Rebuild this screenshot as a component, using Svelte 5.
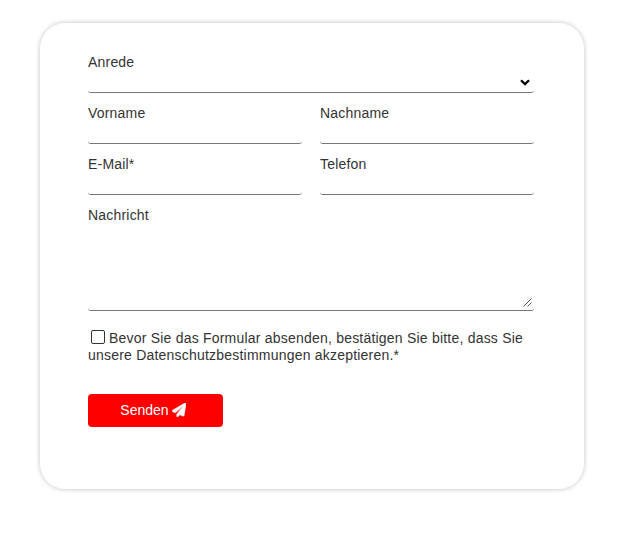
<script lang="ts">
	let anrede = $state('');
	let vorname = $state('');
	let nachname = $state('');
	let email = $state('');
	let telefon = $state('');
	let nachricht = $state('');
	let accepted = $state(false);

	const handleSubmit = (e: SubmitEvent) => {
		e.preventDefault();
	};
</script>

<main>
	<form class="card" onsubmit={handleSubmit}>
		<div class="fields">
			<label class="field wide">
				<span>Anrede</span>
				<div class="select">
					<select bind:value={anrede}>
						<option value=""></option>
						<option>Frau</option>
						<option>Herr</option>
					</select>
					<svg class="chevron" viewBox="0 0 10 7" width="10" height="7">
						<path d="M1 1.2 5 5.1 9 1.2" fill="none" stroke="#000" stroke-width="2.2" />
					</svg>
				</div>
			</label>
			<label class="field">
				<span>Vorname</span>
				<input type="text" bind:value={vorname} />
			</label>
			<label class="field">
				<span>Nachname</span>
				<input type="text" bind:value={nachname} />
			</label>
			<label class="field">
				<span>E-Mail*</span>
				<input type="email" bind:value={email} />
			</label>
			<label class="field">
				<span>Telefon</span>
				<input type="tel" bind:value={telefon} />
			</label>
			<label class="field wide">
				<span>Nachricht</span>
				<div class="message">
					<textarea bind:value={nachricht}></textarea>
					<svg class="grip" viewBox="0 0 9 9" width="9" height="9">
						<path d="M.5 8.5 8.5.5M4.5 8.5 8.5 4.5" stroke="#555" fill="none" />
					</svg>
				</div>
			</label>
		</div>

		<label class="consent">
			<input type="checkbox" bind:checked={accepted} />Bevor Sie das Formular absenden, bestätigen Sie bitte, dass Sie unsere Datenschutzbestimmungen akzeptieren.*
		</label>

		<button type="submit">
			Senden
			<svg viewBox="0 0 512 512" width="14" height="14">
				<path
					fill="#fff"
					stroke="#fff"
					stroke-width="24"
					d="M476 3.2 12.5 270.6c-18.1 10.4-15.8 35.6 2.2 43.2L121 358.4l287.3-253.2c5.5-4.9 13.3 2.6 8.6 8.3L176 407v80.5c0 23.6 28.5 32.9 42.5 15.8L282 426l124.6 52.2c14.2 6 30.4-2.9 33-18.2l72-432C515 7.8 493.3-6.8 476 3.2z"
				/>
			</svg>
		</button>
	</form>
</main>

<style>
	:global(body) {
		background: #fff;
	}

	main {
		box-sizing: border-box;
		min-height: 100vh;
		padding: 23px 0 0 40px;
	}

	.card {
		box-sizing: border-box;
		width: 544px;
		height: 466px;
		padding: 31px 50px 0 48px;
		border-radius: 25px;
		background: #fff;
		box-shadow: 0 0 5px rgba(0, 0, 0, 0.25);
		font: 14px/17px 'Liberation Sans', Arial, sans-serif;
		color: #333;
	}

	.fields {
		display: grid;
		grid-template-columns: 1fr 1fr;
		gap: 12px 18px;
		letter-spacing: 0.2px;
	}

	.field {
		display: flex;
		flex-direction: column;
	}

	.wide {
		grid-column: 1 / -1;
	}

	.field span {
		height: 17px;
	}

	.field input,
	select,
	textarea {
		box-sizing: border-box;
		display: block;
		width: 100%;
		height: 22px;
		margin: 0;
		padding: 0 4px;
		border: 0;
		border-bottom: 1px solid #767676;
		border-radius: 3px;
		background: transparent;
		font: inherit;
		color: inherit;
		outline: none;
	}

	.select,
	.message {
		position: relative;
	}

	select {
		appearance: none;
	}

	.chevron {
		position: absolute;
		top: 8px;
		right: 4px;
		pointer-events: none;
	}

	.field textarea {
		height: 87px;
		resize: none;
	}

	.grip {
		position: absolute;
		right: 2px;
		bottom: 4px;
		pointer-events: none;
	}

	.consent {
		display: block;
		margin-top: 19px;
		letter-spacing: 0.21px;
	}

	.consent input {
		appearance: none;
		box-sizing: border-box;
		width: 14px;
		height: 14px;
		margin: -1px 4px 0 3px;
		border: 1.5px solid #333;
		border-radius: 2px;
		vertical-align: -1px;
	}

	.consent input:checked {
		background: #333;
	}

	button {
		display: flex;
		align-items: center;
		justify-content: center;
		gap: 3px;
		width: 135px;
		height: 33px;
		margin: 30px 0 0;
		padding: 0 5px 0 0;
		border: 0;
		border-radius: 4px;
		background: #f00;
		color: #fff;
		font: inherit;
		cursor: pointer;
	}

	button svg {
		margin-top: -1px;
	}
</style>
